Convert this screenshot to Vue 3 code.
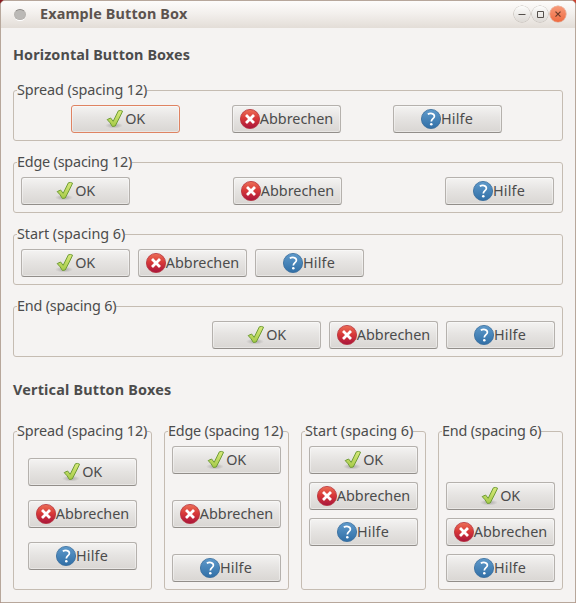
<script setup>
const buttons = [
  { kind: 'ok', label: 'OK' },
  { kind: 'cancel', label: 'Abbrechen' },
  { kind: 'help', label: 'Hilfe' },
]
const boxes = [
  { layout: 'spread', label: 'Spread (spacing 12)' },
  { layout: 'edge', label: 'Edge (spacing 12)' },
  { layout: 'start', label: 'Start (spacing 6)' },
  { layout: 'end', label: 'End (spacing 6)' },
]
const sections = [
  { id: 'horizontal', title: 'Horizontal Button Boxes' },
  { id: 'vertical', title: 'Vertical Button Boxes' },
]
</script>

<template>
  <div class="desktop">
    <svg class="defs" width="0" height="0" aria-hidden="true">
      <defs>
        <linearGradient id="gOk" x1="0" y1="0" x2="0" y2="1">
          <stop offset="0" stop-color="#d8e97c" />
          <stop offset="1" stop-color="#a6cb48" />
        </linearGradient>
        <linearGradient id="gCancel" x1="0" y1="0" x2="0" y2="1">
          <stop offset="0" stop-color="#ec7058" />
          <stop offset="0.45" stop-color="#d93a38" />
          <stop offset="1" stop-color="#a8143c" />
        </linearGradient>
        <linearGradient id="gHelp" x1="0" y1="0" x2="0" y2="1">
          <stop offset="0" stop-color="#5f9acb" />
          <stop offset="1" stop-color="#316fa6" />
        </linearGradient>
        <radialGradient id="gShade">
          <stop offset="0" stop-color="#000" stop-opacity="0.25" />
          <stop offset="1" stop-color="#000" stop-opacity="0" />
        </radialGradient>
      </defs>
    </svg>

    <div class="window">
      <header class="titlebar">
        <span class="menu-dot"></span>
        <span class="title">Example Button Box</span>
        <div class="controls">
          <span class="ctl"><svg viewBox="0 0 16 16"><path d="M4.5 8.5h7" /></svg></span>
          <span class="ctl"><svg viewBox="0 0 16 16"><path d="M5.5 5.5h6v6h-6z" /></svg></span>
          <span class="ctl close"><svg viewBox="0 0 16 16"><path d="M5.5 5.7l5 5M10.5 5.7l-5 5" /></svg></span>
        </div>
      </header>

      <main class="content">
        <section v-for="s in sections" :key="s.id" :class="['section', s.id]">
          <h2 class="heading">{{ s.title }}</h2>
          <div class="boxes">
            <div v-for="b in boxes" :key="b.layout" :class="['frame', b.layout]">
              <div class="legend">{{ b.label }}</div>
              <div class="bbox">
                <button v-for="n in buttons" :key="n.kind" :class="['btn', n.kind]">
                  <svg v-if="n.kind === 'ok'" class="icon" viewBox="0 0 20 20">
                    <ellipse cx="9" cy="16.5" rx="9" ry="3" fill="url(#gShade)" />
                    <path d="M2.2 10.6L5.6 9L8.2 12.3L13.4 1.8Q15.4 .9 17.6 2.2Q14.6 8.6 10.2 17L7.4 17.5Q5.4 13.6 2.2 10.6Z" fill="url(#gOk)" stroke="#6f9d35" stroke-linejoin="round" />
                  </svg>
                  <svg v-else-if="n.kind === 'cancel'" class="icon" viewBox="0 0 20 20">
                    <circle cx="10" cy="10" r="9.6" fill="url(#gCancel)" stroke="#b5303a" stroke-width=".8" />
                    <path d="M7 7l6 6M13 7l-6 6" fill="none" stroke="#fff" stroke-width="2.8" stroke-linecap="square" />
                  </svg>
                  <svg v-else class="icon" viewBox="0 0 20 20">
                    <circle cx="10" cy="10" r="9.6" fill="url(#gHelp)" stroke="#34699a" stroke-width=".8" />
                    <path d="M6.8 5.3C9.2 3.8 13.4 4.2 13.4 7.2C13.4 9.7 10.3 9.8 10.3 12.6" fill="none" stroke="#fff" stroke-width="1.7" />
                    <circle cx="10.3" cy="15.2" r="1.3" fill="#fff" />
                  </svg>
                  <span class="label">{{ n.label }}</span>
                </button>
              </div>
            </div>
          </div>
        </section>
      </main>
    </div>
  </div>
</template>

<style>
body {
  margin: 0;
  overflow: hidden;
}
</style>

<style scoped>
.desktop {
  width: 576px;
  height: 603px;
  background: linear-gradient(90deg, #8a1c22 50%, #c9402e 50%);
  font-family: 'Noto Sans', 'Open Sans', sans-serif;
  font-size: 14.4px;
  color: #4c4c4c;
}
.defs {
  position: absolute;
}
.window {
  box-sizing: border-box;
  width: 576px;
  height: 603px;
  border: 1px solid #b7a79b;
  border-radius: 5px 5px 0 0;
  background: #f5f3f2;
  overflow: hidden;
}
.titlebar {
  box-sizing: border-box;
  display: flex;
  align-items: center;
  height: 27px;
  padding: 0 9px 1px 13px;
  background: linear-gradient(#fdfcfb, #f3f0ed 45%, #e3ddd7);
}
.menu-dot {
  box-sizing: border-box;
  width: 12px;
  height: 11px;
  margin-right: 14px;
  border: 1px solid #b5b2ae;
  border-top-color: #8c8986;
  border-radius: 50%;
  background: #bbb9b6;
  box-shadow: 0 1px 0 #fff;
}
.title {
  flex: 1;
  font-size: 14.4px;
  font-weight: 700;
  letter-spacing: 0.14px;
  line-height: 26px;
  color: #5c534e;
  white-space: nowrap;
}
.controls {
  display: flex;
  gap: 2px;
}
.ctl {
  box-sizing: border-box;
  width: 16px;
  height: 16px;
  border-radius: 50%;
  background: linear-gradient(#fdfdfc, #dedad6);
  box-shadow: 0 0 0 0.6px #b9b3ad;
}
.ctl svg {
  display: block;
  width: 16px;
  height: 16px;
  fill: none;
  stroke: #55504c;
  stroke-width: 1;
}
.ctl.close {
  background: linear-gradient(#f79b7a, #ee6a40);
  box-shadow: 0 0 0 0.6px #dba08a;
}
.ctl.close svg {
  stroke: #6b3a28;
  stroke-width: 1.2;
}
.content {
  padding: 16px 12px 0;
}
.heading {
  margin: 0;
  height: 21px;
  line-height: 21px;
  font-size: 14.4px;
  font-weight: 700;
  letter-spacing: 0.1px;
  white-space: nowrap;
}
.horizontal .boxes {
  display: flex;
  flex-direction: column;
  gap: 21px;
  margin-top: 25px;
}
.vertical {
  margin-top: 22px;
}
.vertical .heading {
  letter-spacing: 0.19px;
}
.vertical .boxes {
  display: grid;
  grid-template-columns: 139px 125px 125px 125px;
  gap: 12px;
  margin-top: 31px;
}
.frame {
  box-sizing: border-box;
  height: 51px;
  padding: 0 7px;
  border: 1px solid #c5bcb2;
  border-radius: 3px;
}
.vertical .frame {
  height: 159px;
}
.legend {
  width: max-content;
  height: 20px;
  margin: -11px 0 5px -4px;
  line-height: 20px;
  background: #f5f3f2;
  white-space: nowrap;
}
.spread .legend {
  letter-spacing: -0.1px;
}
.edge .legend {
  letter-spacing: -0.2px;
}
.start .legend {
  letter-spacing: -0.03px;
}
.end .legend {
  letter-spacing: -0.2px;
}
.bbox {
  display: flex;
  gap: 8px;
}
.horizontal .spread .bbox {
  gap: 52px;
  padding-left: 50px;
}
.horizontal .edge .bbox {
  justify-content: space-between;
  padding-right: 1px;
}
.end .bbox {
  justify-content: flex-end;
}
.vertical .bbox {
  flex-direction: column;
  align-items: center;
  height: 136px;
}
.vertical .spread .bbox {
  justify-content: center;
  gap: 14px;
}
.vertical .edge .bbox {
  justify-content: space-between;
}
.btn {
  box-sizing: border-box;
  display: flex;
  flex: none;
  align-items: center;
  justify-content: center;
  width: 109px;
  height: 28px;
  padding: 0;
  border: 1px solid #b5b1ad;
  border-bottom-color: #928e8a;
  border-radius: 3px;
  background: linear-gradient(#f4f3f2, #e6e4e2 45%, #d9d6d3);
  box-shadow: inset 0 0 0 1px rgba(255, 255, 255, 0.4);
  font: inherit;
  color: inherit;
}
.btn.ok {
  padding-right: 1px;
}
.btn.help {
  padding-right: 1px;
}
.horizontal .spread .ok {
  border-color: #df8362;
}
.icon {
  flex: none;
  width: 20px;
  height: 20px;
}
.label {
  line-height: 20px;
  white-space: nowrap;
}
.help .label {
  letter-spacing: 0.15px;
}
.ok .label {
  letter-spacing: -0.2px;
}
</style>
